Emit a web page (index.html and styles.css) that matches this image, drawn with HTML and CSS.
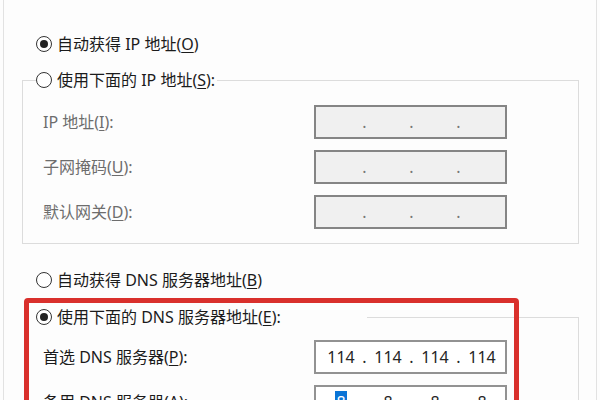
FILE: index.html
```html
<!DOCTYPE html>
<html lang="zh-CN">
<head>
<meta charset="utf-8">
<title>Internet 协议版本 4 (TCP/IPv4) 属性</title>
<link rel="stylesheet" href="styles.css">
</head>
<body>
<div class="frame">
  <div class="opt first"><span class="radio on"></span><span>自动获得 IP 地址(<u>O</u>)</span></div>

  <fieldset class="group g-ip">
    <legend class="opt"><span class="radio"></span><span>使用下面的 IP 地址(<u>S</u>):</span></legend>
    <div class="field off">
      <span class="lab">IP 地址(<u>I</u>):</span>
      <div class="ip dis"><span></span><i>.</i><span></span><i>.</i><span></span><i>.</i><span></span></div>
    </div>
    <div class="field off">
      <span class="lab">子网掩码(<u>U</u>):</span>
      <div class="ip dis"><span></span><i>.</i><span></span><i>.</i><span></span><i>.</i><span></span></div>
    </div>
    <div class="field off">
      <span class="lab">默认网关(<u>D</u>):</span>
      <div class="ip dis"><span></span><i>.</i><span></span><i>.</i><span></span><i>.</i><span></span></div>
    </div>
  </fieldset>

  <div class="opt dns-auto"><span class="radio"></span><span>自动获得 DNS 服务器地址(<u>B</u>)</span></div>

  <fieldset class="group g-dns">
    <legend class="opt"><span class="radio on"></span><span>使用下面的 DNS 服务器地址(<u>E</u>):</span></legend>
    <div class="field">
      <span class="lab">首选 DNS 服务器(<u>P</u>):</span>
      <div class="ip"><span>114</span><i>.</i><span>114</span><i>.</i><span>114</span><i>.</i><span>114</span></div>
    </div>
    <div class="field">
      <span class="lab">备用 DNS 服务器(<u>A</u>):</span>
      <div class="ip"><span><b class="sel">8</b></span><i>.</i><span>8</span><i>.</i><span>8</span><i>.</i><span>8</span></div>
    </div>
  </fieldset>
</div>
<div class="mark"></div>
</body>
</html>
```

FILE: styles.css
```css
html, body {
  margin: 0;
  padding: 0;
  background: #fdfdfd;
  overflow: hidden;
  height: 400px;
}
body {
  position: relative;
  font-family: "Noto Sans", "Noto Sans CJK SC", sans-serif;
  font-size: 16px;
  color: #1b1b1b;
}
u {
  text-underline-offset: 2px;
  text-decoration-thickness: 1px;
}
.frame {
  margin: 0 3px;
  height: 400px;
  box-sizing: border-box;
  border-left: 1px solid #e2e2e2;
  border-right: 1px solid #e2e2e2;
  padding-top: 33px;
  overflow: hidden;
}
.opt {
  display: flex;
  align-items: center;
  gap: 5px;
  height: 22px;
  line-height: 22px;
  white-space: nowrap;
}
.first { padding-left: 32px; }
.dns-auto { padding-left: 32px; margin-top: 25px; }
.radio {
  flex: none;
  width: 16px;
  height: 16px;
  box-sizing: border-box;
  border: 1.5px solid #333;
  border-radius: 50%;
  background: #fff;
  display: flex;
  align-items: center;
  justify-content: center;
}
.radio.on::after {
  content: "";
  width: 8px;
  height: 8px;
  border-radius: 50%;
  background: #222;
}
.group {
  box-sizing: border-box;
  border: 1px solid #dcdcdc;
  margin: 0;
  min-inline-size: 0;
}
.group legend {
  padding: 0 2px 0 0;
}
.g-ip {
  margin: 14px 0 0 18px;
  width: 557px;
  padding: 14px 0 14px 20px;
}
.g-ip legend { margin-left: -7px; }
.g-dns {
  margin: 15px 0 0 21px;
  width: 554px;
  padding: 12px 0 0 17px;
}
.g-dns legend {
  margin-left: -17px;
  padding-left: 10px;
  width: 341px;
  box-sizing: border-box;
}
.field {
  display: flex;
  align-items: center;
  height: 34px;
}
.field + .field { margin-top: 11px; }
.lab {
  width: 271px;
  flex: none;
  white-space: nowrap;
  line-height: 22px;
}
.off .lab { color: #6d6d6d; }
.ip {
  width: 193px;
  height: 34px;
  box-sizing: border-box;
  border: 2px solid #929292;
  background: #fff;
  display: grid;
  grid-template-columns: 1fr 5px 1fr 5px 1fr 5px 1fr;
  align-items: center;
  padding: 0 2px 0 4px;
  font-family: "Noto Sans", sans-serif;
  font-size: 16px;
  color: #262626;
  line-height: 22px;
}
.ip span, .ip i {
  text-align: center;
  font-style: normal;
}
.ip.dis {
  background: #f0f0f0;
  border-color: #858585;
  color: #777;
}
.sel {
  font-weight: normal;
  background: #0a74d6;
  color: #fff;
  padding: 0 1px;
}
.mark {
  position: absolute;
  left: 24px;
  top: 298px;
  width: 495px;
  height: 140px;
  box-sizing: border-box;
  border: 5px solid #d9302c;
  border-radius: 4px;
}
```
